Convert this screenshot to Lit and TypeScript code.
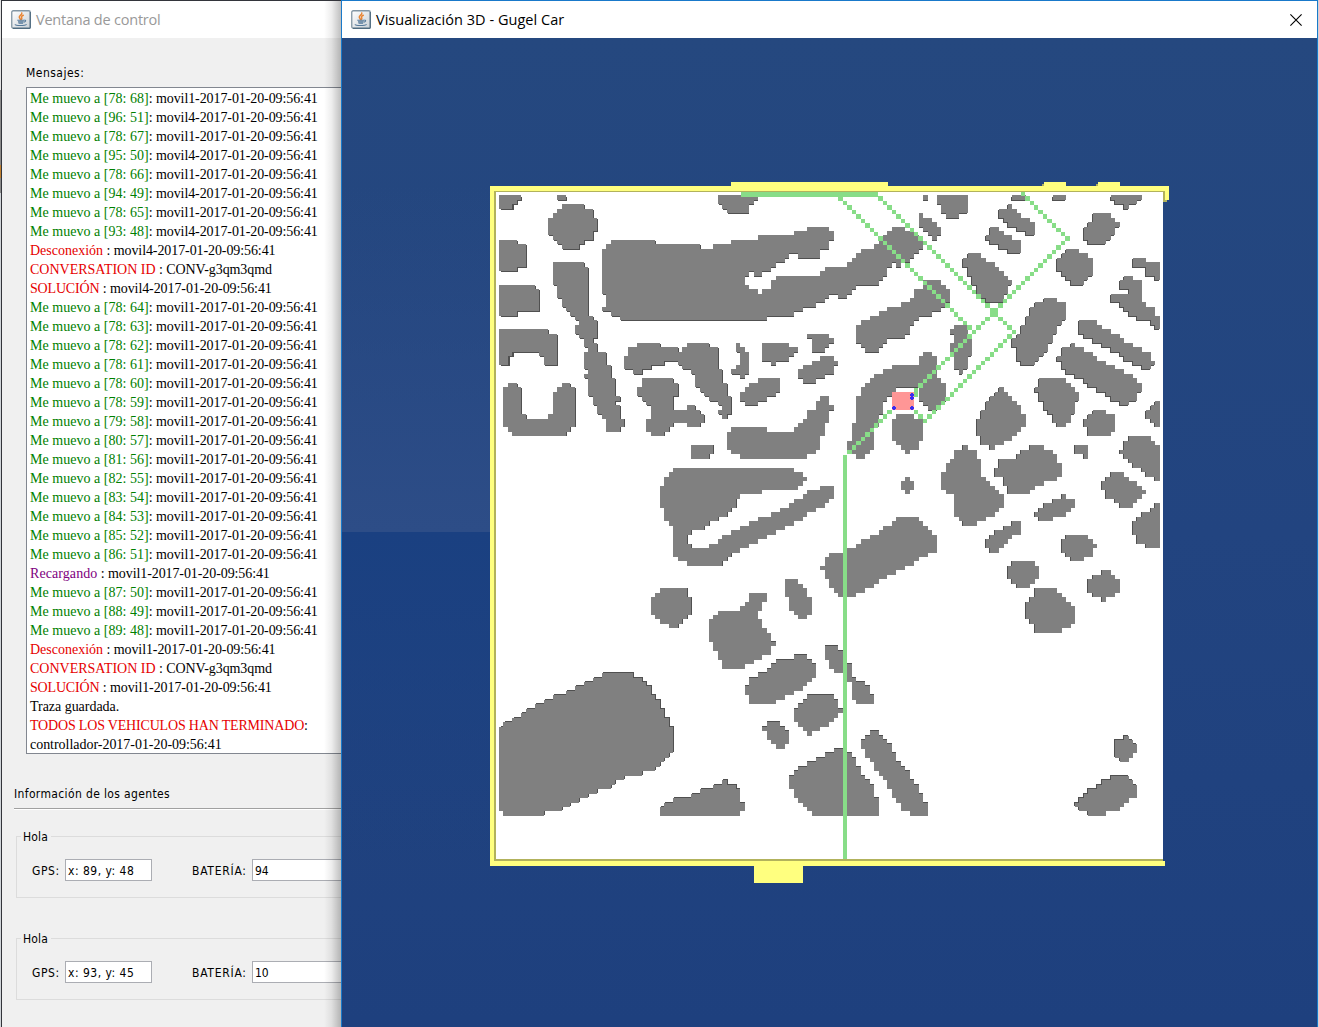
import { LitElement, html, svg, css } from "lit";
import { customElement, property } from "lit/decorators.js";

/* ---------- Data ---------- */

type Entry = { tag: string; kind: string; rest: string };
const STAMP = "-2017-01-20-09:56:41";
const move = (x: number, y: number, who: string): Entry => ({
  tag: `Me muevo a [${x}: ${y}]`,
  kind: "move",
  rest: `: ${who}${STAMP}`,
});
const alertRow = (tag: string, rest: string, kind = "alert"): Entry => ({ tag, kind, rest });
const finish = (who: string): Entry[] => [
  alertRow("Desconexión", ` : ${who}${STAMP}`),
  alertRow("CONVERSATION ID", " : CONV-g3qm3qmd"),
  alertRow("SOLUCIÓN", ` : ${who}${STAMP}`, "alert tight"),
];

const LOG: Entry[] = [
  move(78, 68, "movil1"), move(96, 51, "movil4"), move(78, 67, "movil1"), move(95, 50, "movil4"),
  move(78, 66, "movil1"), move(94, 49, "movil4"), move(78, 65, "movil1"), move(93, 48, "movil4"),
  ...finish("movil4"),
  move(78, 64, "movil1"), move(78, 63, "movil1"), move(78, 62, "movil1"), move(78, 61, "movil1"),
  move(78, 60, "movil1"), move(78, 59, "movil1"), move(79, 58, "movil1"), move(80, 57, "movil1"),
  move(81, 56, "movil1"), move(82, 55, "movil1"), move(83, 54, "movil1"), move(84, 53, "movil1"),
  move(85, 52, "movil1"), move(86, 51, "movil1"),
  { tag: "Recargando", kind: "charge", rest: ` : movil1${STAMP}` },
  move(87, 50, "movil1"), move(88, 49, "movil1"), move(89, 48, "movil1"),
  ...finish("movil1"),
  { tag: "Traza guardada.", kind: "plain", rest: "" },
  alertRow("TODOS LOS VEHICULOS HAN TERMINADO", ":", "alert tight"),
  { tag: `controllador${STAMP}`, kind: "plain", rest: "" },
];

/* Building outlines, grouped by map sheet. Units are thirds of a pixel from the sheet origin. */
type Sheet = { x: number; y: number; shapes: string[] };
const SHEETS: Sheet[] = [
  { x: 485, y: 175, shapes: [
    "42,60 111,60 111,72 97,72 97,90 84,90 84,101 42,101",
    "216,60 244,60 244,74 216,74",
    "228,87 297,87 297,99 324,99 324,127 337,127 337,168 324,168 324,195 297,195 297,208 283,208 283,222 231,222 231,208 216,208 216,195 201,195 201,181 189,181 189,127 201,127 201,114 216,114 216,99 228,99",
    "42,195 97,195 97,208 124,208 124,276 97,276 97,288 42,288",
    "42,327 150,327 150,342 165,342 165,408 97,408 97,423 42,423",
    "42,462 189,462 189,477 217,477 217,570 175,570 175,543 162,543 162,528 84,528 84,543 70,543 70,570 42,570",
    "201,261 297,261 297,276 310,276 310,423 324,423 324,436 337,436 337,490 324,490 324,504 337,504 337,528 364,528 364,570 378,570 378,610 391,610 391,664 405,664 405,677 391,677 391,690 405,690 405,731 418,731 418,757 405,757 405,770 363,770 363,731 350,731 350,717 336,717 336,690 324,690 324,663 309,663 309,610 297,610 297,597 309,597 309,583 297,583 297,528 309,528 309,517 297,517 297,490 283,490 283,477 270,477 270,450 283,450 283,436 270,436 270,423 256,423 256,409 243,409 243,396 228,396 228,369 216,369 216,327 201,327",
    "69,624 97,624 97,637 111,637 111,717 124,717 124,731 189,731 189,717 201,717 201,651 216,651 216,637 228,637 228,624 259,624 259,637 271,637 271,757 259,757 259,770 244,770 244,784 82,784 82,770 69,770 69,757 54,757 54,636 69,636",
    "456,504 526,504 526,517 579,517 579,528 591,528 591,517 603,517 603,504 672,504 672,517 699,517 699,583 712,583 712,624 726,624 726,664 739,664 739,717 726,717 726,731 712,731 712,717 699,717 699,705 712,705 712,690 699,690 699,677 672,677 672,664 657,664 657,651 645,651 645,637 630,637 630,597 618,597 618,583 591,583 591,570 579,570 579,556 540,556 540,570 499,570 499,583 473,583 473,597 445,597 445,583 417,583 417,543 429,543 429,517 456,517",
    "471,610 565,610 565,624 579,624 579,664 565,664 565,705 603,705 603,690 632,690 632,705 645,705 645,717 659,717 659,745 645,745 645,757 605,757 605,745 565,745 565,757 552,757 552,770 540,770 540,784 499,784 499,770 483,770 483,731 499,731 499,690 483,690 483,677 471,677 471,664 456,664 456,637 471,637",
  ] },
  { x: 700, y: 175, shapes: [
    "-240,436 -240,423 -267,423 -267,409 -294,409 -294,396 -282,396 -282,357 -294,357 -294,222 -282,222 -282,208 -270,208 -270,195 -134,195 -134,208 1,208 1,222 39,222 39,208 93,208 93,195 174,195 174,181 282,181 282,168 321,168 321,154 387,154 387,168 401,168 401,195 387,195 387,222 363,222 363,249 294,249 294,236 267,236 267,249 255,249 255,263 228,263 228,276 213,276 213,290 187,290 187,301 162,301 162,290 147,290 147,301 135,301 135,327 147,327 147,342 174,342 174,354 186,354 186,342 213,342 213,315 228,315 228,301 363,301 363,290 375,290 375,276 442,276 442,263 455,263 455,249 468,249 468,236 483,236 483,222 523,222 523,208 537,208 537,195 550,195 550,181 564,181 564,168 577,168 577,154 615,154 615,168 642,168 642,181 656,181 656,193 669,193 669,222 655,222 655,236 642,236 642,249 630,249 630,263 603,263 603,276 588,276 588,263 577,263 577,276 564,276 564,303 550,303 550,315 536,315 536,328 468,328 468,342 455,342 455,357 442,357 442,369 415,369 415,357 387,357 387,369 375,369 375,382 348,382 348,396 309,396 309,409 282,409 282,423 201,423 201,436",
    "54,60 174,60 174,74 162,74 162,90 147,90 147,117 81,117 81,102 67,102 67,90 54,90",
    "108,504 121,504 121,517 134,517 134,530 147,530 147,597 134,597 134,610 121,610 121,597 94,597 94,583 108,583 108,570 121,570 121,528 108,528",
    "186,504 267,504 267,517 294,517 294,530 282,530 282,543 267,543 267,556 228,556 228,570 213,570 213,556 186,556",
    "321,477 387,477 387,490 402,490 402,504 387,504 387,517 375,517 375,530 336,530 336,490 321,490",
    "363,543 402,543 402,556 414,556 414,570 402,570 402,597 375,597 375,610 348,610 348,624 309,624 309,610 294,610 294,583 309,583 309,570 336,570 336,556 363,556",
    "174,610 242,610 242,650 228,650 228,664 201,664 201,677 174,677 174,690 135,690 135,677 120,677 120,651 135,651 135,637 147,637 147,624 174,624",
    "468,450 483,450 483,436 510,436 510,423 537,423 537,409 564,409 564,396 603,396 603,382 630,382 630,369 642,369 642,342 669,342 669,316 723,316 723,328 738,328 738,342 750,342 750,384 738,384 738,396 723,396 723,409 697,409 697,423 657,423 657,436 642,436 642,450 630,450 630,477 615,477 615,490 564,490 564,504 550,504 550,517 537,517 537,530 496,530 496,517 483,517 483,504 468,504",
    "577,570 656,570 656,543 669,543 669,530 697,530 697,543 711,543 711,597 711,610 724,610 724,624 738,624 738,677 724,677 724,690 711,690 711,705 684,705 684,690 670,690 670,677 657,677 657,637 591,637 591,651 577,651 577,664 564,664 564,677 549,677 549,717 537,717 537,757 523,757 523,823 510,823 510,837 496,837 496,851 468,851 468,837 456,837 456,823 442,823 442,797 456,797 456,745 468,745 468,664 483,664 483,637 496,637 496,624 510,624 510,610 523,610 523,597 550,597 550,583 577,583",
  ] },
  { x: 910, y: 175, shapes: [
    "40,60 54,60 54,76 40,76",
    "79,60 174,60 174,117 147,117 147,130 108,130 108,117 93,117 93,90 79,90",
    "26,116 39,116 39,127 67,127 67,141 79,141 79,154 93,154 93,184 79,184 79,195 67,195 67,184 52,184 52,168 39,168 39,154 26,154",
    "308,60 349,60 349,76 308,76",
    "427,60 468,60 468,76 427,76",
    "602,60 696,60 696,76 683,76 683,90 657,90 657,102 642,102 642,90 615,90 615,76 602,76",
    "294,87 308,87 308,100 321,100 321,114 335,114 335,127 362,127 362,141 375,141 375,184 349,184 349,170 321,170 321,156 294,156 294,141 281,141 281,129 267,129 267,100 294,100",
    "240,154 267,154 267,168 281,168 281,181 308,181 308,195 335,195 335,237 294,237 294,222 267,222 267,208 240,208 240,195 228,195 228,181 240,181",
    "173,236 213,236 213,249 227,249 227,263 254,263 254,276 267,276 267,290 281,290 281,303 294,303 294,316 308,316 308,330 294,330 294,357 281,357 281,384 227,384 227,370 213,370 213,357 200,357 200,330 187,330 187,303 173,303 173,276 161,276 161,249 173,249",
    "550,114 603,114 603,127 617,127 617,141 630,141 630,156 617,156 617,182 603,182 603,195 588,195 588,210 534,210 534,195 522,195 522,156 534,156 534,141 550,141",
    "468,222 509,222 509,236 536,236 536,249 549,249 549,303 536,303 536,317 522,317 522,330 482,330 482,317 468,317 468,303 454,303 454,290 441,290 441,252 454,252 454,236 468,236",
    "668,249 710,249 710,263 750,263 750,317 737,317 737,303 708,303 708,276 668,276",
    "642,303 669,303 669,316 696,316 696,382 710,382 710,396 737,396 737,423 750,423 750,464 737,464 737,450 723,450 723,437 683,437 683,423 657,423 657,410 642,410 642,397 630,397 630,384 602,384 602,357 657,357 657,344 627,344 627,317 642,317",
    "509,436 563,436 563,450 576,450 576,464 603,464 603,477 630,477 630,490 642,490 642,504 669,504 669,517 696,517 696,530 723,530 723,556 737,556 737,570 723,570 723,583 696,583 696,570 669,570 669,556 642,556 642,543 630,543 630,530 603,530 603,517 576,517 576,504 549,504 549,490 522,490 522,477 507,477",
    "482,505 495,505 495,517 522,517 522,530 549,530 549,543 563,543 563,556 590,556 590,570 615,570 615,583 642,583 642,597 669,597 669,610 683,610 683,624 696,624 696,651 683,651 683,677 657,677 657,691 630,691 630,677 603,677 603,664 590,664 590,651 563,651 563,637 536,637 536,624 522,624 522,610 495,610 495,597 468,597 468,583 454,583 454,556 441,556 441,543 454,543 454,517 482,517",
    "402,369 441,369 441,382 468,382 468,436 454,436 454,450 441,450 441,477 429,477 429,504 417,504 417,530 402,530 402,543 387,543 387,556 375,556 375,570 335,570 335,556 321,556 321,517 308,517 308,490 321,490 321,477 335,477 335,450 348,450 348,423 362,423 362,396 375,396 375,382 402,382",
    "134,450 173,450 173,490 188,490 188,543 173,543 173,583 161,583 161,597 146,597 146,583 134,583 134,530 122,530 122,504 134,504 134,477 122,477 122,464 134,464",
  ] },
  { x: 485, y: 380, shapes: [
    "618,195 686,195 686,222 672,222 672,236 618,236",
    "525,624 605,624 605,651 620,651 620,705 605,705 605,720 593,720 593,732 579,732 579,746 552,746 552,732 525,732 525,720 510,720 510,705 498,705 498,651 510,651 510,639 525,639",
  ] },
  { x: 700, y: 380, shapes: [
    "-80,264 282,264 282,276 309,276 309,290 321,290 321,304 309,304 309,317 294,317 294,330 187,330 187,343 121,343 121,357 108,357 108,384 94,384 94,397 81,397 81,411 54,411 54,423 27,423 27,438 14,438 14,450 -25,450 -25,464 -40,464 -40,490 -25,490 -25,504 27,504 27,490 54,490 54,478 67,478 67,464 94,464 94,450 121,450 121,438 147,438 147,423 174,423 174,411 213,411 213,396 240,396 240,384 267,384 267,370 282,370 282,357 309,357 309,343 321,343 321,330 363,330 363,318 402,318 402,357 387,357 387,370 375,370 375,384 348,384 348,402 321,402 321,411 309,411 309,423 282,423 282,438 255,438 255,450 228,450 228,464 201,464 201,478 174,478 174,490 147,490 147,504 121,504 121,517 94,517 94,530 81,530 81,544 67,544 67,557 -40,557 -40,543 -66,543 -66,530 -80,530 -80,438 -93,438 -93,423 -108,423 -108,384 -120,384 -120,318 -108,318 -108,290 -93,290 -93,276 -80,276",
    "363,49 387,49 387,75 402,75 402,90 387,90 387,129 375,129 375,168 363,168 363,208 348,208 348,222 321,222 321,236 120,236 120,222 93,222 93,208 81,208 81,155 93,155 93,142 201,142 201,155 282,155 282,142 294,142 294,129 309,129 309,116 321,116 321,90 348,90 348,62 363,62",
    "591,102 642,102 642,116 669,116 669,182 656,182 656,208 630,208 630,222 615,222 615,208 603,208 603,195 588,195 588,182 577,182 577,116 591,116",
    "615,290 630,290 630,304 642,304 642,330 630,330 630,343 615,343 615,330 603,330 603,304 615,304",
    "591,411 657,411 657,423 670,423 670,438 684,438 684,450 697,450 697,464 711,464 711,517 684,517 684,530 657,530 657,543 642,543 642,557 615,557 615,570 591,570 591,583 564,583 564,597 537,597 537,610 523,610 523,624 496,624 496,637 468,637 468,650 415,650 415,637 402,637 402,624 387,624 387,597 375,597 375,570 363,570 363,557 375,557 375,530 387,530 387,519 442,519 442,504 468,504 468,490 483,490 483,478 510,478 510,464 537,464 537,450 550,450 550,438 577,438 577,423 591,423",
    "255,597 294,597 294,610 309,610 309,624 321,624 321,651 336,651 336,705 321,705 321,719 294,719 294,705 282,705 282,690 267,690 267,651 255,651",
    "147,640 201,640 201,664 187,664 187,690 174,690 174,717 187,717 187,745 201,745 201,758 214,758 214,785 227,785 227,798 214,798 214,824 187,824 187,839 162,839 162,851 135,851 135,867 66,867 66,839 54,839 54,812 39,812 39,785 27,785 27,718 39,718 39,705 54,705 54,691 121,691 121,678 135,678 135,664 147,664",
  ] },
  { x: 910, y: 380, shapes: [
    "387,-6 468,-6 468,9 482,9 482,22 495,22 495,36 509,36 509,62 495,62 495,102 482,102 482,129 468,129 468,142 441,142 441,129 429,129 429,102 414,102 414,90 402,90 402,62 387,62 387,36 375,36 375,22 387,22",
    "267,22 281,22 281,36 294,36 294,49 308,49 308,62 321,62 321,75 335,75 335,102 348,102 348,142 335,142 335,155 321,155 321,168 308,168 308,182 281,182 281,195 255,195 255,208 240,208 240,195 213,195 213,168 200,168 200,116 213,116 213,90 227,90 227,62 240,62 240,49 254,49 254,36 267,36",
    "549,90 590,90 590,102 617,102 617,155 603,155 603,168 534,168 534,142 522,142 522,116 534,116 534,102 549,102",
    "735,62 750,62 750,142 735,142 735,129 721,129 721,116 708,116 708,90 721,90 721,75 735,75",
    "495,195 536,195 536,236 522,236 522,222 495,222",
    "657,168 723,168 723,182 737,182 737,195 750,195 750,303 735,303 735,290 708,290 708,276 696,276 696,263 669,263 669,249 654,249 654,236 642,236 642,222 627,222 627,208 642,208 642,182 657,182",
    "602,276 642,276 642,290 657,290 657,304 683,304 683,317 696,317 696,330 710,330 710,343 696,343 696,357 683,357 683,370 669,370 669,384 630,384 630,370 615,370 615,357 588,357 588,330 575,330 575,304 588,304 588,290 602,290",
    "737,370 750,370 750,503 708,503 708,490 681,490 681,464 668,464 668,423 681,423 681,410 696,410 696,397 721,397 721,384 737,384",
    "161,195 173,195 173,210 200,210 200,236 213,236 213,290 227,290 227,304 240,304 240,317 254,317 254,330 267,330 267,343 281,343 281,384 267,384 267,397 254,397 254,411 227,411 227,423 200,423 200,437 161,437 161,423 146,423 146,411 134,411 134,344 107,344 107,330 94,330 94,276 107,276 107,249 121,249 121,237 134,237 134,210 161,210",
    "362,195 402,195 402,210 429,210 429,222 441,222 441,249 455,249 455,290 441,290 441,304 402,304 402,317 375,317 375,330 362,330 362,344 294,344 294,317 281,317 281,290 254,290 254,263 267,263 267,237 321,237 321,222 335,222 335,210 362,210",
    "455,347 468,347 468,357 495,357 495,384 482,384 482,397 468,397 468,411 429,411 429,423 387,423 387,411 375,411 375,397 387,397 387,384 402,384 402,370 429,370 429,357 455,357",
    "308,423 335,423 335,464 308,464 308,477 294,477 294,490 281,490 281,504 267,504 267,517 240,517 240,504 227,504 227,478 241,478 241,464 254,464 254,450 281,450 281,437 308,437",
    "468,464 536,464 536,478 549,478 549,491 563,491 563,504 549,504 549,530 522,530 522,545 482,545 482,530 468,530 468,517 455,517 455,478 468,478",
    "308,545 375,545 375,557 389,557 389,597 375,597 375,611 362,611 362,624 321,624 321,611 308,611 308,597 294,597 294,557 308,557",
    "575,570 603,570 603,585 617,585 617,597 630,597 630,638 617,638 617,651 590,651 590,664 575,664 575,651 549,651 549,638 534,638 534,597 549,597 549,585 575,585",
    "375,624 441,624 441,638 455,638 455,651 468,651 468,664 482,664 482,678 495,678 495,732 482,732 482,745 455,745 455,758 375,758 375,732 362,732 362,718 347,718 347,664 362,664 362,651 375,651",
  ] },
  { x: 485, y: 630, shapes: [
    "351,129 445,129 445,142 472,142 472,155 485,155 485,168 499,168 499,195 511,195 511,208 526,208 526,236 538,236 538,263 551,263 551,290 565,290 565,370 551,370 551,384 538,384 538,397 526,397 526,411 511,411 511,425 472,425 472,437 418,437 418,452 391,452 391,464 378,464 378,479 339,479 339,492 310,492 310,504 285,504 285,517 258,517 258,530 230,530 230,545 177,545 177,557 54,557 54,545 42,545 42,290 54,290 54,275 82,275 82,263 108,263 108,250 123,250 123,236 147,236 147,224 174,224 174,209 201,209 201,197 243,197 243,182 270,182 270,170 297,170 297,155 324,155 324,143 351,143",
    "525,557 525,530 538,530 538,517 565,517 565,504 618,504 618,491 645,491 645,477 684,477 684,464 712,464 712,450 725,450 725,464 753,464 753,477 766,477 766,517 779,517 779,545 766,545 766,557",
  ] },
  { x: 700, y: 630, shapes: [
    "282,75 321,75 321,89 336,89 336,102 348,102 348,142 336,142 336,155 321,155 321,168 309,168 309,182 282,182 282,195 255,195 255,209 228,209 228,224 147,224 147,197 135,197 135,170 147,170 147,142 174,142 174,129 201,129 201,116 214,116 214,102 228,102 228,89 282,89",
    "321,197 402,197 402,209 414,209 414,236 429,236 429,249 414,249 414,263 402,263 402,276 387,276 387,290 363,290 363,303 336,303 336,317 321,317 321,303 309,303 309,290 294,290 294,276 282,276 282,236 294,236 294,224 309,224 309,209 321,209",
    "201,275 242,275 242,290 255,290 255,303 267,303 267,344 255,344 255,357 228,357 228,344 213,344 213,330 201,330 201,303 187,303 187,290 201,290",
    "375,48 414,48 414,62 442,62 442,102 456,102 456,142 468,142 468,155 495,155 495,170 510,170 510,197 522,197 522,224 468,224 468,209 456,209 456,155 442,155 442,129 402,129 402,116 387,116 387,89 375,89",
    "402,355 442,355 442,370 456,370 456,382 468,382 468,409 483,409 483,436 495,436 495,450 510,450 510,464 522,464 522,503 537,503 537,557 336,557 336,545 321,545 321,530 309,530 309,517 294,517 294,503 282,503 282,479 267,479 267,437 282,437 282,423 294,423 294,410 321,410 321,396 348,396 348,382 375,382 375,370 402,370",
    "510,302 537,302 537,317 549,317 549,330 564,330 564,344 576,344 576,370 591,370 591,397 603,397 603,409 615,409 615,423 630,423 630,450 642,450 642,464 657,464 657,490 669,490 669,517 684,517 684,557 630,557 630,545 603,545 603,517 591,517 591,504 576,504 576,477 564,477 564,452 549,452 549,437 537,437 537,425 522,425 522,397 510,397 510,384 495,384 495,357 483,357 483,330 495,330 495,317 510,317",
  ] },
  { x: 1030, y: 700, shapes: [
    "282,106 296,106 296,119 308,119 308,133 323,133 323,161 308,161 308,174 296,174 296,188 269,188 269,174 255,174 255,119 282,119",
    "242,227 296,227 296,241 308,241 308,254 323,254 323,293 296,293 296,308 284,308 284,321 269,321 269,335 230,335 230,347 174,347 174,335 148,335 148,320 134,320 134,306 148,306 148,293 161,293 161,281 174,281 174,266 200,266 200,254 215,254 215,241 242,241",
  ] },
];

/* Roofs sit on a slightly larger grid than the floor because they are nearer the camera. */
const ROOF = 4.465;
const snap = (v: number, origin: number) => Math.round(origin + Math.round((v - origin) / ROOF) * ROOF);
const BUILDINGS = SHEETS.flatMap((s) =>
  s.shapes.map((shape) =>
    "M" + shape.split(" ").map((p) => {
      const [x, y] = p.split(",").map(Number);
      return `${snap(s.x + x / 3, 499)} ${snap(s.y + y / 3, 195.3)}`;
    }).join("L") + "Z",
  ),
).join("");

const FLOOR = 667 / 150;
const cell = (c: number, r: number) => {
  const x0 = Math.round(496 + c * FLOOR), x1 = Math.round(496 + (c + 1) * FLOOR);
  const y0 = Math.round(192 + r * FLOOR), y1 = Math.round(192 + (r + 1) * FLOOR);
  return `M${x0} ${y0}H${x1}V${y1}H${x0}Z`;
};
const run = (c: number, r: number, dc: number, n: number, dr = 1) =>
  Array.from({ length: n }, (_, i) => cell(c + dc * i, r + dr * i)).join("");
const TRAIL = [
  run(77, 1, 1, 30),
  run(86, 1, 1, 31),
  run(118, 0, 1, 11),
  run(127, 11, -1, 34),
  cell(94, 45), cell(111, 26), cell(112, 27),
  run(115, 32, -1, 20),
  run(95, 50, -1, 2, -1),
  run(88, 49, -1, 10),
].join("");

/* ---------- Elements ---------- */

@customElement("java-icon")
class JavaIcon extends LitElement {
  static styles = css`
    :host { display: block; width: 20px; height: 19px; flex: none; }
    svg { display: block; }
  `;
  render() {
    return html`<svg width="20" height="19" viewBox="0 0 20 19">
      <defs>
        <linearGradient id="g" x1="0" y1="0" x2="1" y2="1">
          <stop offset="0" stop-color="#fff" /><stop offset="1" stop-color="#c9d0d6" />
        </linearGradient>
      </defs>
      <rect x=".75" y=".75" width="18.5" height="17.5" rx="1.5" fill="url(#g)" stroke="#8295a3" stroke-width="1.3" />
      <path d="M19.3 2v15.5q0 .8-.8.8H2" fill="none" stroke="#4f6b80" stroke-width="1.2" />
      <path d="M10.8 3c.6 1.6-2.8 2.5-2.5 4.2.1.9 1 1.400 1.200 2.300M12.300 5.300c-1.500.7-2.200 1.500-1.600 2.400.4.7.1 1.200-.4 1.700" fill="none" stroke="#e88534" stroke-width="1.5" stroke-linecap="round" />
      <path d="M6.3 10.300h7M7 11.900h5.700M7.500 13.300h4.600M13.500 10.200c1.800-.3 1.500 1.700-.6 2" fill="none" stroke="#557a9b" stroke-width="1.100" />
      <path d="M4.300 14.300c-.8 1.600 9.800 1.600 11.300.1" fill="none" stroke="#557a9b" stroke-width="1.100" />
    </svg>`;
  }
}

@customElement("agent-panel")
class AgentPanel extends LitElement {
  @property() gps = "";
  @property() battery = "";
  static styles = css`
    :host { display: block; height: 68px; }
    .group {
      position: relative; box-sizing: border-box; height: 62px; margin-left: 14px;
      border: 1px solid #dcdcdc; border-right: 0; padding: 22px 0 0 15px;
      display: flex; align-items: flex-start;
    }
    .legend { position: absolute; left: 4px; top: -8px; padding: 0 3px 0 2px; background: #f0f0f0; line-height: 16px; letter-spacing: .2px; }
    .label { line-height: 24px; white-space: nowrap; flex: none; }
    .gps-label { width: 33px; letter-spacing: .6px; }
    .bat-label { width: 60px; margin-left: 40px; letter-spacing: .75px; }
    .field {
      box-sizing: border-box; height: 22px; width: 87px; flex: none; background: #fff;
      border: 1px solid #abadb3; padding-left: 2px; line-height: 22px; white-space: nowrap; letter-spacing: .5px;
    }
    .wide { width: 120px; letter-spacing: 0; }
  `;
  render() {
    return html`<div class="group">
      <div class="legend">Hola</div>
      <div class="label gps-label">GPS:</div>
      <div class="field">${this.gps}</div>
      <div class="label bat-label">BATERÍA:</div>
      <div class="field wide">${this.battery}</div>
    </div>`;
  }
}

@customElement("city-map")
class CityMap extends LitElement {
  static styles = css`
    :host { display: block; }
    svg { display: block; }
    .bright { fill: #ffff7f; }
    .olive { fill: #b2b25c; }
    .shade { fill: #505050; }
    .roof { fill: #808080; }
    .trail { fill: #88dd88; }
    .robot { fill: #ff9696; }
    .wheel { fill: #3b2df0; }
  `;
  render() {
    return html`<svg width="976" height="989" viewBox="342 38 976 989" shape-rendering="crispEdges">
      <defs>
        <linearGradient id="sky" x1="0" y1="0" x2="0" y2="1">
          <stop offset="0" stop-color="#25487f" /><stop offset=".5" stop-color="#224480" /><stop offset="1" stop-color="#1e407e" />
        </linearGradient>
        <linearGradient id="haze" x1="0" y1="0" x2="0" y2="1">
          <stop offset=".3" stop-color="#2d4d87" stop-opacity="0" /><stop offset="1" stop-color="#2d4d87" />
        </linearGradient>
        <linearGradient id="low" x1="0" y1="0" x2="0" y2="1">
          <stop offset="0" stop-color="#1a4081" /><stop offset="1" stop-color="#1a4081" stop-opacity="0" />
        </linearGradient>
      </defs>
      <rect x="342" y="38" width="976" height="989" fill="url(#sky)" />
      <rect x="342" y="38" width="150" height="494" fill="url(#haze)" />
      <rect x="342" y="532" width="150" height="330" fill="url(#low)" />
      <path class="olive" d="M1042 184h3v3h-3zM1096 184h3v3h-3zM1163 191h4v11h-4z" />
      <path class="bright" d="M490 186H1169V200H1165V191H494V861H1165V866H490ZM731 182H888V187H731ZM1044 182H1066V187H1044ZM1098 182H1120V187H1098ZM754 865H803V883H754Z" />
      <path class="olive" d="M494 191H1163V861H494Z" />
      <rect x="496" y="192" width="667" height="667" fill="#fff" />
      <g transform="translate(850 530) scale(.9955) translate(-850 -530)"><path class="shade" d=${BUILDINGS} /></g>
      <path class="roof" d=${BUILDINGS} />
      <path class="trail" d=${TRAIL} />
      <path class="trail" d="M741 192H878V197H741ZM843 455H847V859H843Z" />
      <path class="robot" d="M892 392H914V410H892Z" />
      <path class="wheel" d="M910 394h1v-1h2v1h1v2h-1v1h1v2h-1v1h-2v-1h-1v-2h1v-1h-1zM910 407h1v-1h2v1h1v2h-1v1h-2v-1h-1zM892 407h1v-1h2v1h1v2h-1v1h-2v-1h-1z" />
    </svg>`;
  }
}

@customElement("app-root")
class AppRoot extends LitElement {
  static styles = css`
    :host {
      display: block; position: relative; width: 1319px; height: 1027px; overflow: hidden; background: #d4d4d4;
      font-family: "DejaVu Sans Condensed", "DejaVu Sans", sans-serif; font-stretch: condensed; font-size: 12px; color: #000;
    }
    .window { position: absolute; top: 0; box-sizing: border-box; height: 1027px; display: flex; flex-direction: column; overflow: hidden; }
    .control { left: 1px; width: 340px; border-left: 1px solid #33353b; border-top: 1px solid #33353b; background: #f0f0f0; }
    .viewer { left: 341px; width: 977px; border: 1px solid #1979ca; border-bottom: 0; }
    .titlebar {
      box-sizing: border-box; height: 37px; flex: none; background: #fff; display: flex; align-items: center;
      gap: 5px; padding: 0 15px 0 9px; font: 14.5px/20px "Open Sans", "Noto Sans", sans-serif;
    }
    .caption { white-space: nowrap; letter-spacing: .03px; }
    .inactive { color: #999; letter-spacing: -.22px; }
    .close { margin-left: auto; display: block; }
    .messages-label { margin: 27px 0 0 24px; line-height: 16px; height: 22px; letter-spacing: .48px; }
    .log {
      box-sizing: border-box; margin-left: 24px; height: 667px; flex: none; background: #fff;
      border: 1px solid #828790; border-right: 0; padding: 1px 0 0 3px; overflow: hidden;
      font: 14px/19px "Liberation Serif", serif;
    }
    .entry { white-space: nowrap; height: 19px; letter-spacing: -.09px; }
    .move { color: #008000; letter-spacing: .03px; }
    .alert { color: #e60000; letter-spacing: 0; }
    .tight { letter-spacing: -.18px; }
    .charge { color: #800080; letter-spacing: .08px; }
    .plain { letter-spacing: -.03px; }
    .section { margin: 32px 0 0 12px; line-height: 16px; height: 22px; border-bottom: 1px solid #a0a0a0; box-shadow: 0 1px #fff; flex: none; letter-spacing: .36px; }
    .agents { display: flex; flex-direction: column; gap: 34px; margin-top: 27px; }
    .shadow { position: absolute; right: 0; top: 0; bottom: 0; width: 17px; background: linear-gradient(to right, transparent, rgba(0, 0, 0, .07) 45%, rgba(0, 0, 0, .25)); }
    .backdrop { position: absolute; left: 0; top: 0; width: 1px; height: 1027px; background: linear-gradient(#e4e4e4 0 90px, #8a8a8a 90px 165px, #c08030 165px 178px, #8a8a8a 178px 193px, #d0d4d8 193px); }
  `;
  render() {
    return html`
      <div class="backdrop"></div>
      <section class="window control">
        <div class="titlebar"><java-icon></java-icon><span class="caption inactive">Ventana de control</span></div>
        <div class="messages-label">Mensajes:</div>
        <div class="log">
          ${LOG.map((e) => html`<div class="entry"><span class=${e.kind}>${e.tag}</span>${e.rest}</div>`)}
        </div>
        <div class="section">Información de los agentes</div>
        <div class="agents">
          <agent-panel gps="x: 89, y: 48" battery="94"></agent-panel>
          <agent-panel gps="x: 93, y: 45" battery="10"></agent-panel>
        </div>
        <div class="shadow"></div>
      </section>
      <section class="window viewer">
        <div class="titlebar">
          <java-icon></java-icon><span class="caption">Visualización 3D - Gugel Car</span>
          <svg class="close" width="12" height="12" viewBox="0 0 12 12">${svg`<path d="M.4 .4L11.6 11.6M11.6 .4L.4 11.6" stroke="#000" stroke-width="1.1" />`}</svg>
        </div>
        <city-map></city-map>
      </section>
    `;
  }
}
